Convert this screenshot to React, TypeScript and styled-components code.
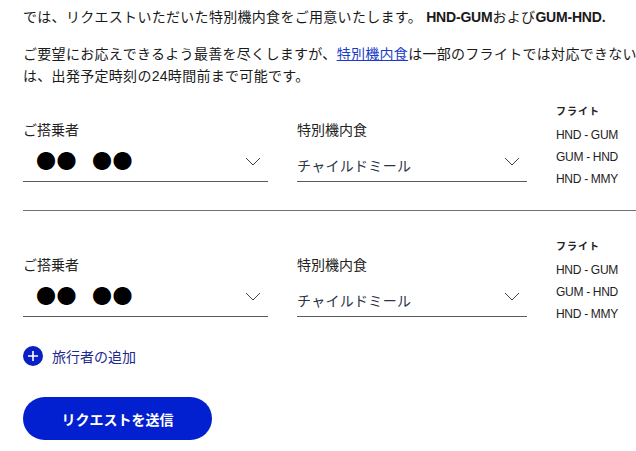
import React from 'react';
import styled, { createGlobalStyle } from 'styled-components';

type Traveller = {
  name: string;
  meal: string;
  flights: string[];
};

const travellers: Traveller[] = [
  { name: '●● ●●', meal: 'チャイルドミール', flights: ['HND - GUM', 'GUM - HND', 'HND - MMY'] },
  { name: '●● ●●', meal: 'チャイルドミール', flights: ['HND - GUM', 'GUM - HND', 'HND - MMY'] },
];

const GlobalStyle = createGlobalStyle`
  html, body {
    margin: 0;
    padding: 0;
    background: #ffffff;
    overflow: hidden;
  }
  body {
    font-family: "Liberation Sans", "Noto Sans CJK JP", sans-serif;
    color: #1a1a1a;
  }
`;

const Page = styled.div`
  width: 100%;
  overflow: hidden;
  padding: 6px 0 0 23px;
  box-sizing: border-box;
`;

const Intro = styled.p`
  margin: 0 0 15px;
  font-size: 14px;
  line-height: 22px;
  letter-spacing: 0.3px;
  white-space: nowrap;
  b {
    font-weight: 700;
    letter-spacing: -0.2px;
  }
  a {
    color: #1a3cc8;
    text-decoration: underline;
  }
`;

const Row = styled.div<{ $divider?: boolean }>`
  display: grid;
  grid-template-columns: 245px 230px 1fr;
  column-gap: 29px;
  align-items: start;
  padding-bottom: ${(p) => (p.$divider ? '20px' : '0')};
  border-bottom: ${(p) => (p.$divider ? '1px solid #707070' : 'none')};
  & + & {
    margin-top: 26px;
  }
`;

const Field = styled.div`
  padding-top: 17px;
`;

const Label = styled.div`
  font-size: 14px;
  line-height: 22px;
  color: #222;
`;

const Select = styled.div`
  height: 40px;
  display: flex;
  align-items: center;
  justify-content: space-between;
  border-bottom: 1px solid #5a5a5a;
  padding-right: 7px;
`;

const MaskedName = styled.span`
  font-family: "Noto Sans CJK JP", sans-serif;
  font-size: 20px;
  line-height: 1;
  color: #000;
  margin-left: 13px;
  letter-spacing: 0.5px;
  word-spacing: 10px;
  white-space: pre;
`;

const MealValue = styled.span`
  font-size: 14px;
  color: #2a3446;
  padding-top: 8px;
  letter-spacing: 0.3px;
`;

const Chevron = styled.svg`
  width: 16px;
  height: 9px;
  flex-shrink: 0;
`;

const Flights = styled.div`
  padding-top: 1px;
`;

const FlightHead = styled.div`
  font-size: 10px;
  font-weight: 700;
  line-height: 18px;
  color: #222;
  letter-spacing: 1px;
`;

const FlightList = styled.ul`
  list-style: none;
  margin: 3px 0 0;
  padding: 0;
  font-size: 12px;
  line-height: 22px;
  color: #222;
  letter-spacing: -0.3px;
`;

const AddTraveller = styled.button`
  display: flex;
  align-items: center;
  gap: 9px;
  margin-top: 21px;
  padding: 0;
  border: none;
  background: none;
  font-family: inherit;
  font-size: 14px;
  color: #1c2a8c;
  cursor: pointer;
`;

const PlusCircle = styled.span`
  width: 20px;
  height: 20px;
  border-radius: 50%;
  background: #0a1fc4;
  display: flex;
  align-items: center;
  justify-content: center;
`;

const SubmitButton = styled.button`
  display: block;
  margin-top: 31px;
  width: 189px;
  height: 43px;
  border: none;
  border-radius: 22px;
  background: #0320d0;
  color: #ffffff;
  font-family: inherit;
  font-size: 14px;
  font-weight: 700;
  cursor: pointer;
`;

const ChevronIcon = () => (
  <Chevron viewBox="0 0 16 9">
    <path d="M1 1 L8 8 L15 1" fill="none" stroke="#444" strokeWidth="1" />
  </Chevron>
);

const TravellerRow = ({ traveller, divider }: { traveller: Traveller; divider?: boolean }) => (
  <Row $divider={divider}>
    <Field>
      <Label>ご搭乗者</Label>
      <Select>
        <MaskedName>{traveller.name}</MaskedName>
        <ChevronIcon />
      </Select>
    </Field>
    <Field>
      <Label>特別機内食</Label>
      <Select>
        <MealValue>{traveller.meal}</MealValue>
        <ChevronIcon />
      </Select>
    </Field>
    <Flights>
      <FlightHead>フライト</FlightHead>
      <FlightList>
        {traveller.flights.map((f) => (
          <li key={f}>{f}</li>
        ))}
      </FlightList>
    </Flights>
  </Row>
);

export default function App() {
  return (
    <>
      <GlobalStyle />
      <Page>
        <Intro>
          では、リクエストいただいた特別機内食をご用意いたします。 <b>HND-GUM</b>および<b>GUM-HND.</b>
        </Intro>
        <Intro>
          ご要望にお応えできるよう最善を尽くしますが、<a href="#">特別機内食</a>は一部のフライトでは対応できない
          <br />
          は、出発予定時刻の24時間前まで可能です。
        </Intro>
        {travellers.map((t, i) => (
          <TravellerRow key={i} traveller={t} divider={i < travellers.length - 1} />
        ))}
        <AddTraveller>
          <PlusCircle>
            <svg width="12" height="12" viewBox="0 0 12 12">
              <path d="M6 1 V11 M1 6 H11" stroke="#fff" strokeWidth="1.6" />
            </svg>
          </PlusCircle>
          旅行者の追加
        </AddTraveller>
        <SubmitButton>リクエストを送信</SubmitButton>
      </Page>
    </>
  );
}
